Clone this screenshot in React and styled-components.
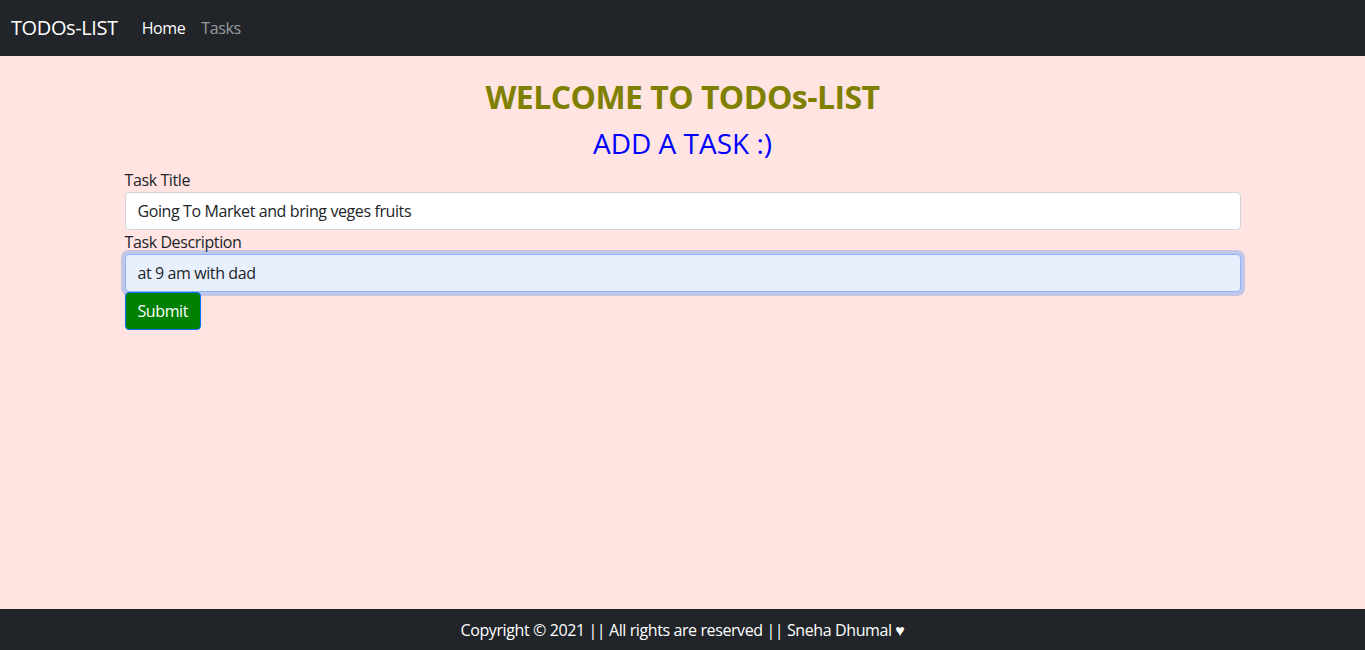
import React from "react";
import styled, { createGlobalStyle } from "styled-components";

const GlobalStyle = createGlobalStyle`
  *, *::before, *::after { box-sizing: border-box; }
  html, body { margin: 0; padding: 0; }
  body {
    font-family: "Open Sans", "Noto Sans", "Liberation Sans", sans-serif;
    font-size: 16px;
    line-height: 1.5;
    letter-spacing: -0.4px;
    color: #212529;
    background: #ffe4e1;
  }
`;

const Page = styled.div`
  min-height: 100vh;
  display: flex;
  flex-direction: column;
`;

const Navbar = styled.nav`
  background: #212529;
  height: 56px;
  padding: 8px 12px 8px 11px;
  display: flex;
  align-items: center;
`;

const Brand = styled.a`
  font-size: 20px;
  line-height: 30px;
  padding: 5px 0;
  margin-right: 16px;
  color: #fff;
  text-decoration: none;
  white-space: nowrap;
`;

const NavList = styled.ul`
  display: flex;
  list-style: none;
  margin: 0;
  padding: 0;
`;

const NavLink = styled.a`
  display: block;
  padding: 8px;
  line-height: 24px;
  text-decoration: none;
  color: ${(p) => (p.$active ? "#fff" : "rgba(255,255,255,0.55)")};
`;

const Main = styled.main`
  flex: 1;
`;

const Container = styled.div`
  max-width: 1140px;
  margin: 0 auto;
  padding: 0 12px;
`;

const Title = styled.h2`
  margin: 22px 0 11px;
  font-size: 32px;
  line-height: 1.2;
  font-weight: 700;
  letter-spacing: -0.55px;
  text-align: center;
  color: #808000;
`;

const SubTitle = styled.h3`
  margin: 0 0 7px;
  font-size: 28px;
  line-height: 1.2;
  font-weight: 500;
  letter-spacing: 0;
  text-align: center;
  color: #0000ff;
`;

const Form = styled.form`
  display: flex;
  flex-direction: column;
  align-items: flex-start;
`;

const Label = styled.label`
  display: block;
  line-height: 24px;
`;

const Input = styled.input`
  display: block;
  width: 100%;
  height: 38px;
  padding: 6px 12px;
  font-family: inherit;
  font-size: 16px;
  line-height: 24px;
  letter-spacing: inherit;
  color: #212529;
  background: ${(p) => (p.$autofilled ? "#e8f0fe" : "#fff")};
  border: 1px solid ${(p) => (p.$focused ? "#86b7fe" : "#ced4da")};
  border-radius: 4px;
  outline: none;
  caret-color: #000;
  box-shadow: ${(p) => (p.$focused ? "0 0 0 4px rgba(13,110,253,0.25)" : "none")};
`;

const SubmitButton = styled.button`
  height: 38px;
  padding: 6px 12px;
  font-family: inherit;
  font-size: 16px;
  line-height: 24px;
  letter-spacing: inherit;
  color: #fff;
  background: #008000;
  border: 1px solid #0d6efd;
  border-radius: 4px;
  cursor: pointer;
`;

const Footer = styled.footer`
  background: #212529;
  color: #fff;
  height: 41px;
  display: flex;
  align-items: center;
  justify-content: center;
  font-size: 16px;
`;

export default function App() {
  return (
    <>
      <GlobalStyle />
      <Page>
        <Navbar>
          <Brand href="#">TODOs-LIST</Brand>
          <NavList>
            <li><NavLink href="#" $active>Home</NavLink></li>
            <li><NavLink href="#">Tasks</NavLink></li>
          </NavList>
        </Navbar>
        <Main>
          <Container>
            <Title>WELCOME TO TODOs-LIST</Title>
            <SubTitle>ADD A TASK :)</SubTitle>
            <Form onSubmit={(e) => e.preventDefault()}>
              <Label htmlFor="title">Task Title</Label>
              <Input id="title" type="text" defaultValue="Going To Market and bring veges fruits" />
              <Label htmlFor="desc">Task Description</Label>
              <Input id="desc" type="text" defaultValue="at 9 am with dad" $focused $autofilled autoFocus />
              <SubmitButton type="submit">Submit</SubmitButton>
            </Form>
          </Container>
        </Main>
        <Footer>Copyright © 2021 || All rights are reserved || Sneha Dhumal ♥</Footer>
      </Page>
    </>
  );
}
